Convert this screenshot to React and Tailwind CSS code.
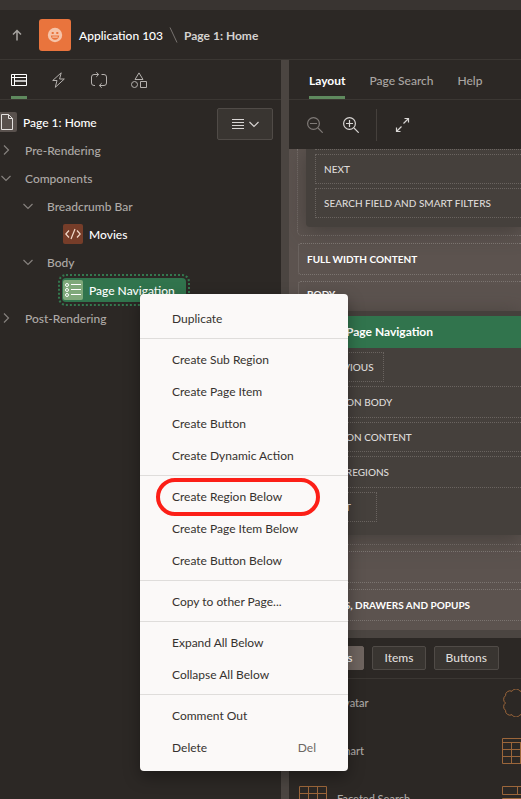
import React from "react";

const stroke = {
  fill: "none",
  stroke: "currentColor",
  strokeWidth: 1,
};

function TreeIcon() {
  return (
    <svg className="h-4 w-4" viewBox="0 0 16 16" {...stroke}>
      <path d="M.5 2.5h15v11H.5zM.5 5.5h15M3.5 2.5v11" />
      <path d="M3.5 9h12" strokeWidth="2" opacity=".7" />
    </svg>
  );
}

function BoltIcon() {
  return (
    <svg className="h-4 w-4" viewBox="0 0 16 16" {...stroke} strokeLinejoin="round">
      <path d="M10.2.8 1.700 8.500h4.300L4.300 15.300l9-8.300H8.600z" />
    </svg>
  );
}

function LoopIcon() {
  return (
    <svg className="h-4 w-4" viewBox="0 0 16 16" {...stroke}>
      <path d="M4 13.500H3A2.500 2.500 0 0 1 .5 11V5A2.500 2.500 0 0 1 3 2.500h4.500M5.300.3l2.400 2.200-2.400 2.300M10.500 2.500H13A2.500 2.500 0 0 1 15.500 5v6a2.500 2.500 0 0 1-2.500 2.500H8.500M10.700 11.200l-2.400 2.300 2.400 2.200" />
    </svg>
  );
}

function ShapesIcon() {
  return (
    <svg className="h-4 w-4" viewBox="0 0 16 16" {...stroke}>
      <path d="M8 .9 12 7.500H4zM9.500 9.500h6v6h-6z" />
      <circle cx="3.500" cy="12.500" r="3" />
    </svg>
  );
}

function Chevron({ open }) {
  return (
    <svg className="h-3 w-3 shrink-0 text-[#86817e]" viewBox="0 0 12 12" {...stroke} strokeWidth="1.200">
      <path d={open ? "M1.500 4 6 8.500 10.500 4" : "M4 1.500 8.500 6 4 10.500"} />
    </svg>
  );
}

function ZoomIcon({ plus }) {
  return (
    <svg className="h-4 w-4" viewBox="0 0 16 16" {...stroke} strokeWidth="1.200">
      <circle cx="6.500" cy="6.500" r="5.900" />
      <path d={plus ? "M3 6.500h7M6.500 3v7M11 11l4.700 4.700" : "M3 6.500h7M11 11l4.700 4.700"} />
    </svg>
  );
}

function GridIcon() {
  return (
    <svg className="h-7 w-7 shrink-0" viewBox="0 0 28 28" {...stroke}>
      <path d="M.5 1.500h27v25H.5zM.5 8.500h27M.5 14.500h27M.5 20.500h27M9.500 1.500v25M18.500 1.500v25" />
    </svg>
  );
}

function TableIcon() {
  return (
    <svg className="h-7 w-7 shrink-0" viewBox="0 0 28 28" {...stroke} role="img" aria-label="Classic Report">
      <path d="M.5 1.500h27v25H.5zM.5 5.500h27M.5 12.500h27M.5 19.500h27M9.500 5.500v21M18.500 5.500v21" />
    </svg>
  );
}

function CardsIcon() {
  return (
    <svg className="h-7 w-7 shrink-0" viewBox="0 0 28 28" {...stroke} role="img" aria-label="Cards">
      <path d="M.5 1.500h27v8H.5zM15.500 1.500v8M.5 13.500h27v8H.5zM15.500 13.500v8" />
    </svg>
  );
}

function BadgeIcon() {
  return (
    <svg className="h-7 w-7 shrink-0" viewBox="0 0 28 28" {...stroke} role="img" aria-label="Badge">
      <path d="M10 2.300a4.500 4.500 0 0 1 8 0 4.500 4.500 0 0 1 6.500 4.400 4.500 4.500 0 0 1 0 14.600 4.500 4.500 0 0 1-6.500 4.400 4.500 4.500 0 0 1-8 0 4.500 4.500 0 0 1-6.500-4.400 4.500 4.500 0 0 1 0-7.300 4.500 4.500 0 0 1 0-7.300A4.500 4.500 0 0 1 10 2.300z" />
    </svg>
  );
}

function AvatarIcon() {
  return (
    <svg className="h-7 w-7 shrink-0" viewBox="0 0 28 28" {...stroke}>
      <circle cx="14" cy="14" r="13" />
      <circle cx="14" cy="11" r="4" />
      <path d="M6 23c1-8 15-8 16 0" />
    </svg>
  );
}

function ChartIcon() {
  return (
    <svg className="h-7 w-7 shrink-0" viewBox="0 0 28 28" {...stroke}>
      <path d="M.5 1.500v25h27M5.500 15.500h4v11h-4zM13.500 8.500h4v18h-4zM21.500 3.500h4v23h-4z" />
    </svg>
  );
}

function Header() {
  return (
    <header className="flex h-[50px] shrink-0 items-center border-b border-[#3b3733] pl-2">
      <button aria-label="Up" className="mr-[14px] flex h-8 w-[17px] items-center justify-center text-[#a8a4a1]">
        <svg className="h-3 w-3" viewBox="0 0 12 12" {...stroke} strokeWidth="1.500">
          <path d="M6 11.500V1.500M2 5.500l4-4 4 4" />
        </svg>
      </button>
      <span className="flex h-8 w-8 items-center justify-center rounded-[3px] bg-[#e9743d]">
        <svg className="h-4 w-4" viewBox="0 0 16 16">
          <circle cx="8" cy="8" r="7.200" fill="#f6c3a8" />
          <path d="M4.700 5h2v2h-2zM9.300 5h2v2h-2zM3.800 8.500h8.400a4.200 4.200 0 0 1-8.400 0z" fill="#e9743d" />
          <path d="M5.300 9.500h5.400v1.200H5.300z" fill="#f6c3a8" />
        </svg>
      </span>
      <a href="#app" className="ml-2 pt-0.5 font-medium text-white">Application 103</a>
      <svg className="mx-[6px] h-4 w-[9px] text-[#77726f]" viewBox="0 0 9 16" {...stroke}>
        <path d="M1 .5 8 15.500" />
      </svg>
      <h1 className="pt-0.5 font-bold text-[#d5d2d0]">Page 1: Home</h1>
    </header>
  );
}

function IconTab({ active, label, children }) {
  return (
    <button
      aria-label={label}
      className={
        active
          ? "flex h-[39px] items-center border-b-[3px] border-[#5f8a5e] pt-[3px] text-white"
          : "flex h-[39px] items-center border-b-[3px] border-transparent pt-[3px] text-[#b5b1ae]"
      }
    >
      {children}
    </button>
  );
}

function TextTab({ active, children }) {
  return (
    <button
      className={
        active
          ? "h-[39px] border-b-[3px] border-[#5f8a5e] pt-[5px] font-bold text-white"
          : "h-[39px] border-b-[3px] border-transparent pt-[5px] font-medium text-[#aaa6a3]"
      }
    >
      {children}
    </button>
  );
}

function Branch({ open, nested, children }) {
  return (
    <li className={nested ? "flex h-7 items-center gap-[13px] pl-[22px]" : "flex h-7 items-center gap-[13px]"}>
      <Chevron open={open} />
      <span className="pt-0.5">{children}</span>
    </li>
  );
}

function TreePane() {
  return (
    <aside className="flex w-[281px] shrink-0 flex-col">
      <nav className="flex h-10 shrink-0 gap-6 border-b border-[#3b3733] pl-[11px]">
        <IconTab active label="Rendering"><TreeIcon /></IconTab>
        <IconTab label="Dynamic Actions"><BoltIcon /></IconTab>
        <IconTab label="Processing"><LoopIcon /></IconTab>
        <IconTab label="Shared Components"><ShapesIcon /></IconTab>
      </nav>
      <div className="flex items-start pt-2 pr-2">
        <ul className="flex-1 font-medium text-[#aeaaa7]">
          <li className="flex h-7 items-center gap-[6px] text-white">
            <span className="flex h-5 w-[17px] items-center rounded-r-[2px] bg-[#59514d] text-[#e5e2e0]">
              <svg className="ml-px h-4 w-3" viewBox="0 0 12 16" {...stroke}>
                <path d="M.5.5h7l4 4v11H.5zM7.500.5v4h4" />
              </svg>
            </span>
            <span className="pt-0.5">Page 1: Home</span>
          </li>
          <Branch>Pre-Rendering</Branch>
          <Branch open>Components</Branch>
          <Branch open nested>Breadcrumb Bar</Branch>
          <li className="flex h-7 items-center gap-[6px] pl-[63px] text-white">
            <span className="flex h-5 w-5 items-center justify-center rounded-[2px] bg-[#763d29] text-[#f1d9ca]">
              <svg className="h-4 w-4" viewBox="0 0 16 16" {...stroke} strokeWidth="1.200">
                <path d="M4 4.500.8 8 4 11.500M12 4.500 15.200 8 12 11.500M10 3l-4 10" />
              </svg>
            </span>
            <span className="pt-0.5">Movies</span>
          </li>
          <Branch open nested>Body</Branch>
          <li className="flex h-7 items-center pl-[58px]">
            <span className="-my-1 flex rounded-lg border-2 border-dotted border-[#33794f] p-[2px]">
              <span className="flex h-6 items-center gap-[6px] rounded-[4px] bg-[#31744d] pr-[11px] pl-px text-white">
                <span className="flex h-5 w-5 items-center justify-center rounded-[2px] bg-[#7fa87a]">
                  <svg className="h-4 w-4" viewBox="0 0 16 16" {...stroke}>
                    <circle cx="2" cy="3" r="1.500" />
                    <circle cx="2" cy="8" r="1.500" />
                    <circle cx="2" cy="13" r="1.500" />
                    <path d="M6 2.500h10M6 7.500h10M6 12.500h10" />
                  </svg>
                </span>
                <span className="pt-0.5">Page Navigation</span>
              </span>
            </span>
          </li>
          <Branch>Post-Rendering</Branch>
        </ul>
        <button
          aria-label="Tree options"
          className="flex h-8 w-14 items-center justify-center gap-[5px] rounded-[2px] border border-[#504b47] bg-[#393531] text-[#d8d5d3]"
        >
          <svg className="h-3 w-3" viewBox="0 0 12 12" {...stroke}>
            <path d="M0 1.500h12M0 4.500h12M0 7.500h12M0 10.500h12" />
          </svg>
          <svg className="h-3 w-[10px]" viewBox="0 0 10 12" {...stroke} strokeWidth="1.200">
            <path d="M.5 4 5 8.500 9.500 4" />
          </svg>
        </button>
      </div>
    </aside>
  );
}

function Slot({ tall, children }) {
  return (
    <div
      className={
        tall
          ? "flex h-8 items-center border border-r-0 border-dotted border-[#6a6460] pl-2"
          : "flex h-[30px] items-center border border-r-0 border-dotted border-[#6a6460] pl-2"
      }
    >
      {children}
    </div>
  );
}

function InlineSlot({ children }) {
  return (
    <div className="flex h-[30px] min-w-[62px] items-center self-start border border-dotted border-[#6a6460] px-[9px]">
      {children}
    </div>
  );
}

function Position({ children }) {
  return (
    <div className="ml-px flex h-8 items-center rounded-l-[3px] border border-r-0 border-dotted border-[#7b7470] pl-2 font-bold text-white">
      {children}
    </div>
  );
}

function LayoutCanvas() {
  return (
    <section className="h-[481px] shrink-0 overflow-hidden bg-[#5c534f] pl-2 text-[10px] font-medium whitespace-nowrap text-[#dedbd9]">
      <div className="rounded-bl-[5px] border-b border-l border-dotted border-[#7b7470] pb-2 pl-2">
        <div className="flex flex-col gap-1 rounded-bl-[4px] bg-[#45403c] pb-[9px] pl-[9px] shadow-[0_4px_20px_#3f3a36cc]">
          <div className="h-px border-b border-dotted border-[#6a6460]" />
          <Slot>NEXT</Slot>
          <Slot>SEARCH FIELD AND SMART FILTERS</Slot>
        </div>
      </div>
      <div className="flex flex-col gap-[6px] pt-[7px]">
        <Position>FULL WIDTH CONTENT</Position>
        <div className="ml-px rounded-l-[3px] border border-r-0 border-dotted border-[#7b7470] pb-[9px]">
          <h3 className="h-[29px] pt-1 pl-2 font-bold text-white">BODY</h3>
          <div className="ml-[7px] bg-[#45403c] pt-[5px] pb-[13px] shadow-[0_4px_20px_#3f3a36cc]">
            <h3 className="flex h-8 items-center bg-[#31744d] pl-10 text-[12px] font-bold text-white">
              Page Navigation
            </h3>
            <div className="flex flex-col gap-1 pt-1 pl-[9px]">
              <InlineSlot>PREVIOUS</InlineSlot>
              <Slot tall>REGION BODY</Slot>
              <Slot>REGION CONTENT</Slot>
              <Slot tall>SUB REGIONS</Slot>
              <InlineSlot>NEXT</InlineSlot>
            </div>
          </div>
        </div>
        <Position>FOOTER</Position>
        <Position>DIALOGS, DRAWERS AND POPUPS</Position>
      </div>
    </section>
  );
}

function GalleryButton({ active, children }) {
  return (
    <button
      className={
        active
          ? "h-6 rounded-[2px] border border-[#6e645f] bg-[#6e645f] px-[11px] font-medium text-white"
          : "h-6 rounded-[2px] border border-[#504b47] bg-[#393531] px-[11px] font-medium text-[#dedbd9]"
      }
    >
      {children}
    </button>
  );
}

const gallery = [
  [AvatarIcon, "Avatar", BadgeIcon],
  [ChartIcon, "Chart", TableIcon],
  [GridIcon, "Faceted Search", CardsIcon],
];

function Gallery() {
  return (
    <section className="min-h-0 flex-1 overflow-hidden">
      <div className="flex h-[41px] items-center justify-start gap-2 border-b border-[#3b3733] pl-[10px]">
        <GalleryButton active>Regions</GalleryButton>
        <GalleryButton>Items</GalleryButton>
        <GalleryButton>Buttons</GalleryButton>
      </div>
      <ul className="pl-[10px]">
        {gallery.map(([Icon, name, NextIcon]) => (
          <li key={name} className="grid h-12 grid-cols-[203px_28px] items-center text-[#9c663a]">
            <span className="flex items-center gap-[10px]">
              <Icon />
              <span className="text-[11px] font-medium text-[#aeaaa7]">{name}</span>
            </span>
            <NextIcon />
          </li>
        ))}
      </ul>
    </section>
  );
}

function MainPane() {
  return (
    <main className="flex min-w-0 flex-1 flex-col">
      <nav className="flex h-10 shrink-0 gap-6 border-b border-[#3b3733] pl-5">
        <TextTab active>Layout</TextTab>
        <TextTab>Page Search</TextTab>
        <TextTab>Help</TextTab>
      </nav>
      <div className="flex h-[49px] shrink-0 items-center pl-[18px]">
        <button aria-label="Zoom out" className="text-[#7f7a77]"><ZoomIcon /></button>
        <button aria-label="Zoom in" className="ml-5 text-[#d8d5d3]"><ZoomIcon plus /></button>
        <span className="ml-[17px] h-8 w-px bg-[#45403c]" />
        <button aria-label="Expand" className="ml-[18px] text-[#d8d5d3]">
          <svg className="h-4 w-4" viewBox="0 0 16 16" {...stroke}>
            <path d="M9.500 1.500h4v4M13.500 1.500l-5 5M5.500 14.500h-4v-4M1.500 14.500l5-5" strokeWidth="1.200" />
          </svg>
        </button>
      </div>
      <LayoutCanvas />
      <div className="h-2 shrink-0 bg-[#4b4541]" />
      <Gallery />
    </main>
  );
}

const menuGroups = [
  ["Duplicate"],
  ["Create Sub Region", "Create Page Item", "Create Button", "Create Dynamic Action"],
  ["Create Region Below", "Create Page Item Below", "Create Button Below"],
  ["Copy to other Page..."],
  ["Expand All Below", "Collapse All Below"],
  ["Comment Out", "Delete"],
];

function ContextMenu() {
  return (
    <div
      role="menu"
      className="absolute top-[294px] left-[140px] w-[208px] divide-y divide-[#dfdddb] rounded-[4px] bg-[#fbf9f8] py-1 text-[#36322f] shadow-[0_6px_16px_#00000059]"
    >
      {menuGroups.map((group) => (
        <div key={group[0]} className="py-1">
          {group.map((label) => (
            <button
              key={label}
              role="menuitem"
              className="relative flex h-8 w-full items-center justify-between pt-0.5 pr-8 pl-8"
            >
              {label}
              {label === "Delete" && <span className="text-[#6c6763]">Del</span>}
              {label === "Create Region Below" && (
                <span className="absolute -top-0.5 right-7 -bottom-1 left-4 rounded-full border-4 border-[#fc1f17]" />
              )}
            </button>
          ))}
        </div>
      ))}
    </div>
  );
}

export default function App() {
  return (
    <div className="relative flex h-screen flex-col overflow-hidden bg-[#2c2825] font-['Lato',sans-serif] text-[12px] leading-4">
      <div className="h-[10px] shrink-0 bg-[#393431]" />
      <Header />
      <div className="flex min-h-0 flex-1">
        <TreePane />
        <div className="w-2 shrink-0 bg-[#4b4541]" />
        <MainPane />
      </div>
      <ContextMenu />
    </div>
  );
}
